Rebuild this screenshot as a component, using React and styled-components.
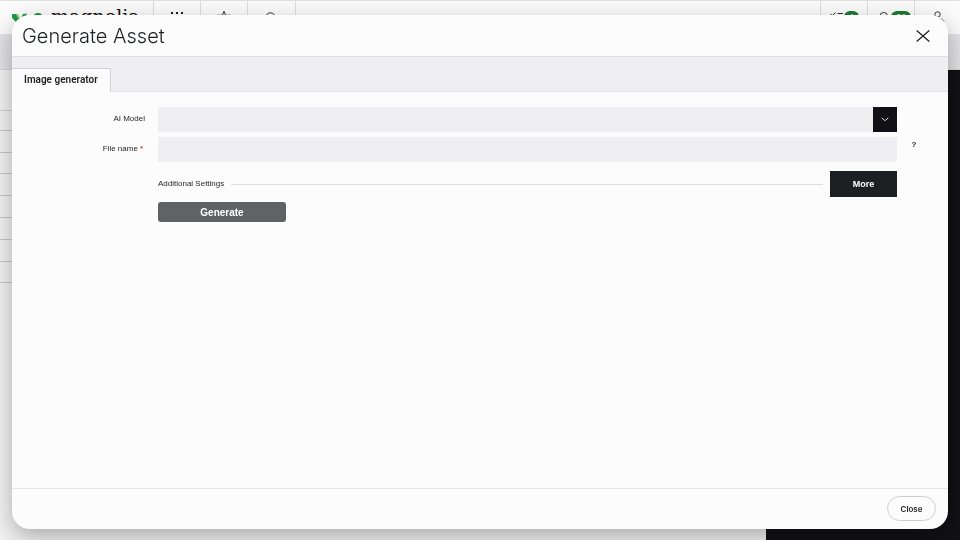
import React from 'react'
import styled, { createGlobalStyle } from 'styled-components'


function App() {
  return (
    <>
      <GlobalStyle />
      <Page aria-hidden="true">
        <TopBar>
          <Brand>
            <LogoMark />
            <BrandName>magnolia</BrandName>
          </Brand>
          <Tool><DotsIcon /></Tool>
          <Tool><StarIcon /></Tool>
          <Tool $width="48px"><CircleIcon /></Tool>
          <Spacer />
          <Tool $start><ChecksIcon /><Badge $width="15px">4</Badge></Tool>
          <Tool $start><BellIcon /><Badge $width="20px">24</Badge></Tool>
          <Tool $width="46px"><UserIcon /></Tool>
        </TopBar>
        <SubBar />
        <Workspace>
          <List>
            <ListHead />
            {[1, 2, 3, 4, 5, 6, 7, 8].map((n) => <ListRow key={n} />)}
          </List>
          <Preview />
        </Workspace>
      </Page>

      <Overlay>
        <Dialog role="dialog" aria-labelledby="dialog-title">
          <Header>
            <Title id="dialog-title">Generate Asset</Title>
            <IconButton type="button" aria-label="Close dialog">
              <svg width="14" height="12" viewBox="0 0 14 12" fill="none" stroke="#222" strokeWidth="1.3">
                <path d="M.7.6 13.3 11.4M13.3.6.7 11.4" />
              </svg>
            </IconButton>
          </Header>
          <Tabs role="tablist">
            <Tab type="button" role="tab" aria-selected="true">Image generator</Tab>
          </Tabs>
          <Form onSubmit={(e) => e.preventDefault()}>
            <Row>
              <Label htmlFor="model">AI Model</Label>
              <SelectBox>
                <Select id="model" defaultValue="">
                  <option value=""></option>
                </Select>
                <Arrow>
                  <svg width="8" height="5" viewBox="0 0 8 5" fill="none" stroke="#ddd" strokeWidth="1">
                    <path d="M.7.8 3.3 3.2Q4 3.8 4.7 3.2L7.3.8" />
                  </svg>
                </Arrow>
              </SelectBox>
            </Row>
            <Row>
              <Label htmlFor="filename">File name<Required>*</Required></Label>
              <Input id="filename" type="text" />
              <Help type="button" aria-label="Help">?</Help>
            </Row>
            <Settings>
              <Legend>Additional Settings</Legend>
              <Rule />
              <MoreButton type="button">More</MoreButton>
            </Settings>
            <GenerateButton type="submit">Generate</GenerateButton>
          </Form>
          <Footer>
            <CloseButton type="button">Close</CloseButton>
          </Footer>
        </Dialog>
      </Overlay>
    </>
  )
}

const LogoMark = () => (
  <svg width="32" height="18" viewBox="0 0 32 18" fill="#259b45">
    <path d="M0 4h5l3 5-4 3-4-4z" />
    <path d="M9 8l2-4 3.500-.5L15 8l-5 4z" />
    <path d="M4 4.500 6 4l2 3-2 1z" fill="#a8d48c" />
    <path d="M21 8c0-3 2-5 5-5s5 2 5 5-2 5-5 5-5-2-5-5z" />
    <path d="M24 8c1-2 3-2 4 0z" fill="#a6d8b0" />
  </svg>
)

const DotsIcon = () => (
  <svg width="14" height="14" viewBox="0 0 14 14" fill="#222">
    <path d="M1 1h2v2H1zM6 1h2v2H6zM11 1h2v2h-2zM1 6h2v2H1zM6 6h2v2H6zM11 6h2v2h-2z" />
  </svg>
)

const StarIcon = () => (
  <svg width="14" height="14" viewBox="0 0 14 14" fill="none" stroke="#333">
    <path d="M7 .3 8.600 4.300H13.500L10 7.500l1.200 4.800L7 9.800l-4.200 2.500L4 7.500.5 4.300h4.900z" />
  </svg>
)

const CircleIcon = () => (
  <svg width="14" height="14" viewBox="0 0 14 14" fill="none" stroke="#333">
    <circle cx="5.500" cy="6.500" r="4.700" />
    <path d="M9 10l4 3.500" />
  </svg>
)

const ChecksIcon = () => (
  <svg width="13" height="14" viewBox="0 0 13 14" fill="none" stroke="#333">
    <path d="M.5 3l2 1.500 3-3M7.500 2.500H13M.5 9l2 2 3-3.500M7.500 10H13" />
  </svg>
)

const BellIcon = () => (
  <svg width="13" height="14" viewBox="-2 0 13 14" fill="none" stroke="#333">
    <path d="M1 10V5.200a3.700 3.700 0 0 1 7.500 0V10z" />
  </svg>
)

const UserIcon = () => (
  <svg width="14" height="14" viewBox="0 0 14 14" fill="none" stroke="#333">
    <circle cx="6.500" cy="3.500" r="2.700" />
    <path d="M1 12c0-3 2-4.500 6-4.500s5 1.500 6 3" />
  </svg>
)

const GlobalStyle = createGlobalStyle`
* {
  box-sizing: border-box;
}
body {
  margin: 0;
  color: #1f2124;
  font-family: "Liberation Sans", Arial, sans-serif;
}
button, input, select {
  font-family: inherit;
  border: 0;
  border-radius: 0;
  padding: 0;
}
`;

const Page = styled.div`
display: flex;
flex-direction: column;
height: 100vh;
background: #efefef;
`;

const TopBar = styled.div`
display: flex;
height: 34px;
background: #fbfbfb;
border-top: 1px solid #e2e2e2;
`;

const Brand = styled.div`
display: flex;
align-items: flex-start;
width: 153px;
padding: 9px 0 0 12px;
gap: 7px;
`;

const BrandName = styled.span`
font-family: "DejaVu Serif", serif;
font-size: 19px;
line-height: 12px;
color: #111;
`;

const Tool = styled.div`
display: flex;
justify-content: ${(props) => (props.$start ? 'flex-start' : 'center')};
width: ${(props) => props.$width || '47px'};
padding-top: 10px;
padding-left: ${(props) => (props.$start ? '9px' : '0')};
gap: 1px;
border-left: 1px solid #dcdcdc;
`;

const Spacer = styled.div`
flex: 1;
border-left: 1px solid #dcdcdc;
`;

const Badge = styled.span`
width: ${(props) => props.$width};
height: 12px;
border-radius: 6px;
background: #1f7a30;
color: #fff;
font-size: 8px;
line-height: 12px;
text-align: center;
`;

const SubBar = styled.div`
height: 36px;
background: #e3e3e5;
border-bottom: 1px solid #d4d4d6;
`;

const Workspace = styled.div`
display: grid;
flex: 1;
grid-template-columns: 1fr 194px;
`;

const List = styled.div`
background: #f3f3f3;
`;

const ListHead = styled.div`
height: 41px;
border-bottom: 1px solid #d2d2d2;
`;

const ListRow = styled.div`
height: 22px;
border-bottom: 1px solid #c8c8c8;

&:nth-child(2) {
  height: 20px;
}
&:nth-child(5n + 4) {
  height: 21px;
}
`;

const Preview = styled.div`
background: #111116;
`;

const Overlay = styled.div`
position: fixed;
inset: 0;
display: flex;
padding: 15px 12px 11px;
`;

const Dialog = styled.section`
display: flex;
flex: 1;
flex-direction: column;
overflow: hidden;
background: #fcfcfc;
border-radius: 18px;
box-shadow: 0 8px 24px rgba(0, 0, 0, 0.3);
`;

const Header = styled.header`
display: flex;
align-items: center;
justify-content: space-between;
height: 42px;
padding: 0 17px 0 10px;
border-bottom: 1px solid #dedee0;
`;

const Title = styled.h1`
margin: 0;
font-family: Inter, sans-serif;
font-size: 20px;
font-weight: 300;
line-height: 28px;
`;

const IconButton = styled.button`
display: grid;
place-items: center;
width: 16px;
height: 16px;
background: none;
`;

const Tabs = styled.div`
display: flex;
align-items: flex-end;
height: 35px;
background: #efeff1;
border-bottom: 1px solid #e2e2e4;
`;

const Tab = styled.button`
height: 24px;
margin-bottom: -1px;
padding: 0 12px 2px;
background: #fcfcfc;
border: 1px solid #d2d2d4;
border-width: 1px 1px 0 0;
border-top-right-radius: 2px;
color: #1f2124;
font-family: Roboto, sans-serif;
font-size: 10px;
font-weight: 600;
`;

const Form = styled.form`
display: grid;
flex: 1;
align-content: start;
padding: 15px 0;
row-gap: 5px;
`;

const Row = styled.div`
display: grid;
grid-template-columns: 133px 1fr 51px;
height: 25px;
gap: 13px;

& > :nth-child(2) {
  margin-right: -13px;
}
`;

const Label = styled.label`
align-self: start;
text-align: right;
font-size: 8px;
line-height: 24px;
`;

const Required = styled.span`
margin: 0 2px;
color: #d8422f;
font-weight: 700;
`;

const SelectBox = styled.div`
display: grid;
grid-template-columns: 1fr 24px;
height: 25px;
`;

const Select = styled.select`
grid-area: 1 / 1 / 2 / 3;
appearance: none;
background: #efeff1;
`;

const Arrow = styled.span`
grid-area: 1 / 2;
display: grid;
place-items: center;
background: #111116;
pointer-events: none;
`;

const Input = styled.input`
height: 25px;
background: #efeff1;
`;

const Help = styled.button`
justify-self: start;
align-self: start;
width: 10px;
height: 15px;
margin-left: 12px;
background: none;
color: #1f2124;
font-size: 8px;
font-weight: 700;
`;

const Settings = styled.div`
display: flex;
align-items: center;
gap: 7px;
margin: 4px 51px 0 146px;
`;

const Legend = styled.span`
font-size: 8px;
line-height: 12px;
`;

const Rule = styled.span`
flex: 1;
height: 1px;
background: #dcdcde;
`;

const MoreButton = styled.button`
width: 67px;
height: 26px;
background: #1c2023;
color: #fff;
font-size: 9px;
font-weight: 700;
`;

const GenerateButton = styled.button`
width: 128px;
height: 20px;
margin-left: 146px;
background: #606366;
border-radius: 3px;
color: #fff;
font-size: 10px;
font-weight: 700;
`;

const Footer = styled.footer`
display: flex;
align-items: center;
justify-content: flex-end;
height: 41px;
padding: 0 12px 1px 0;
border-top: 1px solid #e6e6e8;
`;

const CloseButton = styled.button`
width: 49px;
height: 25px;
background: #fcfcfc;
border: 1px solid #cfcfd1;
border-radius: 13px;
color: #1f2124;
font-family: Inter, sans-serif;
font-size: 8px;
font-weight: 600;
`;

export default App
